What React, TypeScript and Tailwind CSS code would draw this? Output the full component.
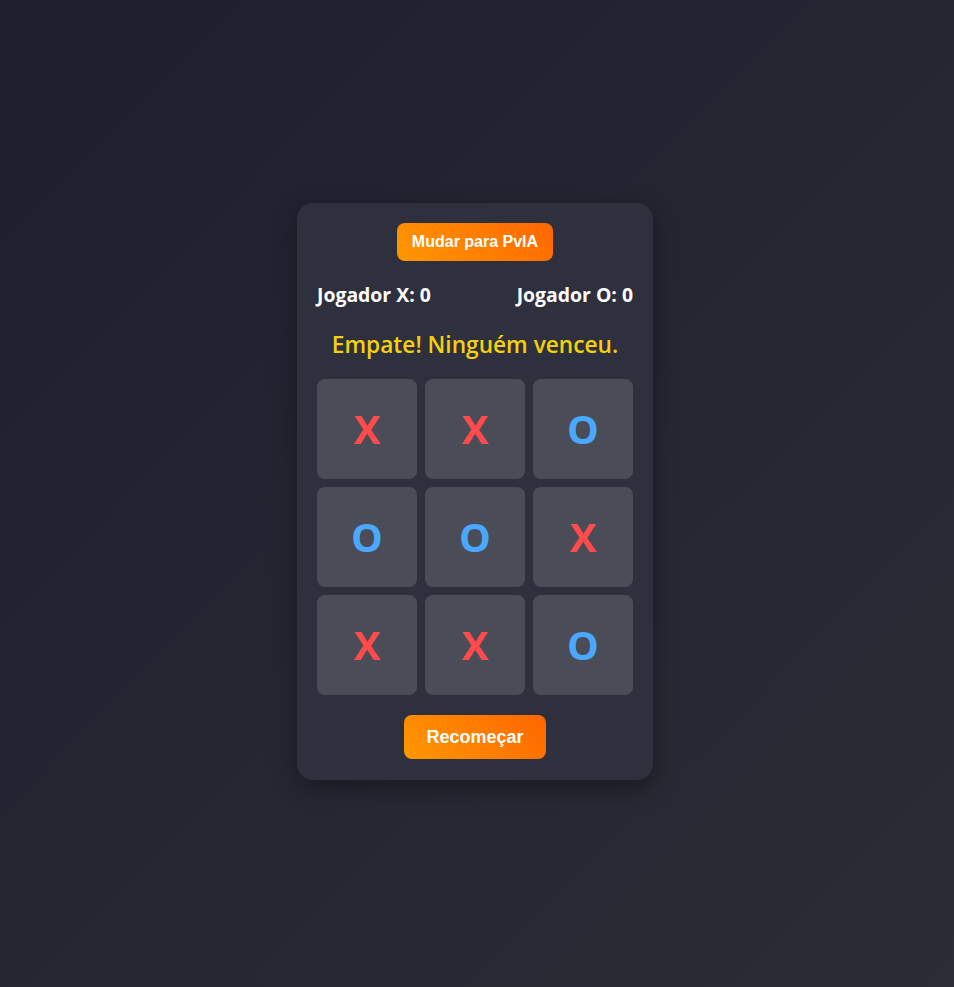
import { useState } from "react"

type Cell = 'X' | 'O' | null

const initialBoard: Cell[] = ['X', 'X', 'O', 'O', 'O', 'X', 'X', 'X', 'O']

const App = () => {
  const [board] = useState<Cell[]>(initialBoard)
  const [scores] = useState({ X: 0, O: 0 })

  return (
    <div className="min-h-[987px] w-full flex items-center justify-center pr-1 pb-[5px] bg-[linear-gradient(135deg,#1e1f2f,#2a2d35)] font-['Open_Sans','Noto_Sans',sans-serif]">
      <div className="w-[356px] px-5 pt-5 pb-[21px] rounded-2xl bg-[#2f303d] shadow-[0_8px_24px_rgba(0,0,0,0.35)] flex flex-col items-center">
        <button className="px-[15px] py-[10px] rounded-lg bg-[linear-gradient(45deg,#ff9800,#ff6600)] text-white font-bold text-base leading-[18px] font-['Liberation_Sans',Arial,sans-serif]">
          Mudar para PvIA
        </button>

        <div className="w-full flex justify-between mt-[22px] text-white font-bold text-[19.4px] leading-6">
          <span>Jogador X: {scores.X}</span>
          <span>Jogador O: {scores.O}</span>
        </div>

        <h2 className="mt-[23px] text-[22.7px] leading-[30px] font-semibold text-[#f5d00c]">
          Empate! Ninguém venceu.
        </h2>

        <div className="mt-[19px] grid grid-cols-3 gap-2">
          {board.map((cell, i) => (
            <div
              key={i}
              className="w-[100px] h-[100px] rounded-lg bg-[#4a4d57] flex items-center justify-center"
            >
              <span className={`text-[40px] font-bold leading-none ${cell === 'X' ? 'text-[#ff4b4b]' : 'text-[#4aa8ff]'}`}>
                {cell}
              </span>
            </div>
          ))}
        </div>

        <button className="mt-[20px] px-[22px] py-3 rounded-lg bg-[linear-gradient(45deg,#ff9800,#ff6600)] text-white font-bold text-lg leading-5 font-['Liberation_Sans',Arial,sans-serif]">
          Recomeçar
        </button>
      </div>
    </div>
  )
}

export default App
